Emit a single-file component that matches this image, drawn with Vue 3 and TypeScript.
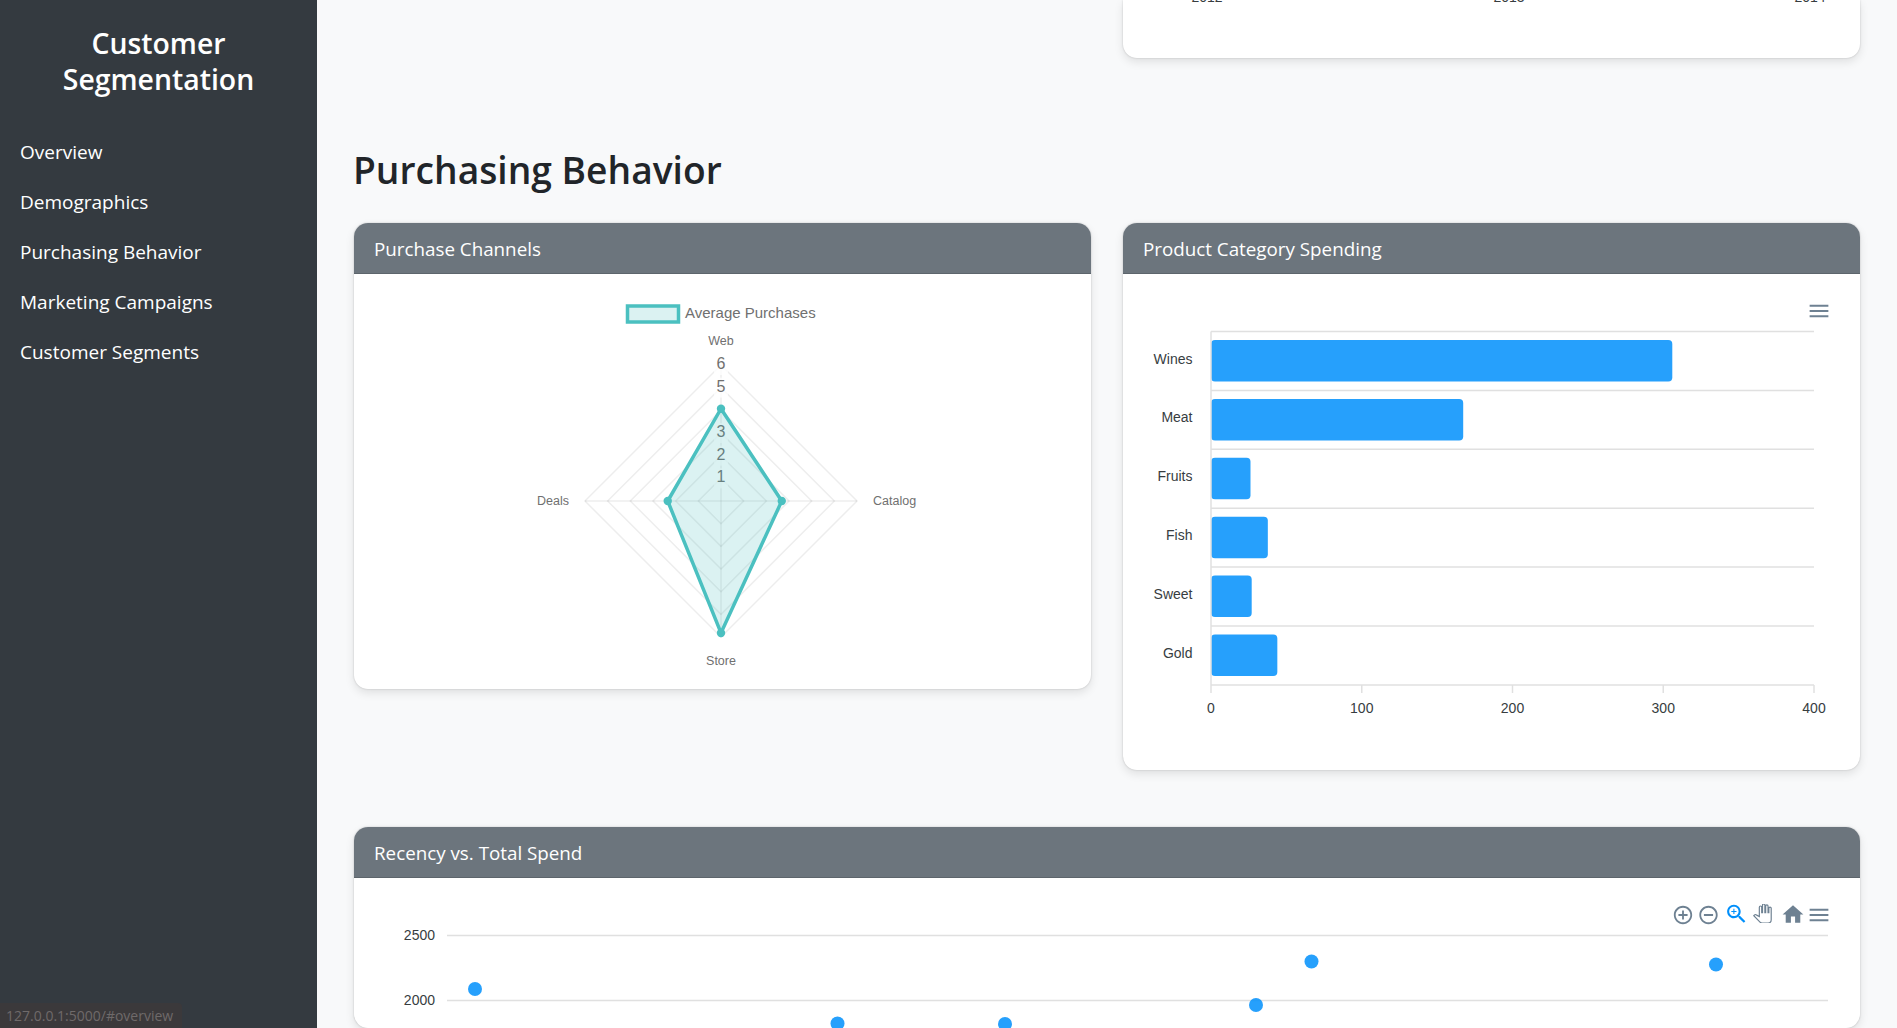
<script setup lang="ts">
const navItems = ["Overview", "Demographics", "Purchasing Behavior", "Marketing Campaigns", "Customer Segments"];

// radar: page coordinates, axis order web / catalog / store / deals
const cx = 721;
const cy = 501;
const step = 22.67;
const diamond = (r: number) =>
    `${cx},${cy - r} ${cx + r},${cy} ${cx},${cy + r} ${cx - r},${cy}`;
const levels = [1, 2, 3, 4, 5, 6].map((n) => diamond(n * step));
const ticks = [1, 2, 3, 5, 6];
const purchases = [4.07, 2.68, 5.82, 2.35];
const radarPoints = [
    { x: cx, y: cy - purchases[0] * step },
    { x: cx + purchases[1] * step, y: cy },
    { x: cx, y: cy + purchases[2] * step },
    { x: cx - purchases[3] * step, y: cy },
];
const radarPolygon = radarPoints.map((p) => `${p.x},${p.y}`).join(" ");

// bars
const barLeft = 1211;
const unit = 603 / 400;
const rowTop = 331.5;
const rowH = 58.9;
const categories = [
    { name: "Wines", value: 306 },
    { name: "Meat", value: 167.3 },
    { name: "Fruits", value: 26.2 },
    { name: "Fish", value: 37.7 },
    { name: "Sweet", value: 27 },
    { name: "Gold", value: 44 },
];
const xTicks = [0, 100, 200, 300, 400];

const scatter = [
    { x: 475, y: 989 },
    { x: 837.5, y: 1023.5 },
    { x: 1005, y: 1024 },
    { x: 1256, y: 1005 },
    { x: 1311.5, y: 961.5 },
    { x: 1716, y: 964.5 },
];
</script>

<template>
    <div class="app">
        <aside class="sidebar">
            <h2 class="brand">Customer Segmentation</h2>
            <nav class="nav">
                <a v-for="item in navItems" :key="item" class="nav-link" href="#">{{ item }}</a>
            </nav>
        </aside>

        <main class="content">
            <div class="row">
                <div></div>
                <div class="card tail">
                    <svg class="chart" viewBox="1123 0 737 58" width="737" height="58">
                        <text class="axis" x="1207" y="2" text-anchor="middle">2012</text>
                        <text class="axis" x="1509" y="2" text-anchor="middle">2013</text>
                        <text class="axis" x="1810" y="2" text-anchor="middle">2014</text>
                    </svg>
                </div>
            </div>

            <h1 class="section-title">Purchasing Behavior</h1>

            <div class="row">
                <section class="card">
                    <header class="card-header">Purchase Channels</header>
                    <svg class="chart" viewBox="354 274 737 415" width="737" height="415">
                        <rect x="627.5" y="306" width="51" height="16" fill="rgba(75,192,192,.2)" stroke="#4bc0c0" stroke-width="3.5" />
                        <text class="legend" x="685" y="318">Average Purchases</text>
                        <text class="point-label" :x="cx" y="344.5" text-anchor="middle">Web</text>
                        <text class="point-label" x="873" y="505" text-anchor="start">Catalog</text>
                        <text class="point-label" x="569" y="505" text-anchor="end">Deals</text>
                        <text class="point-label" :x="cx" y="665" text-anchor="middle">Store</text>

                        <polygon v-for="(pts, i) in levels" :key="i" :points="pts" fill="none" class="radar-grid" />
                        <line :x1="cx" :y1="cy - 136" :x2="cx" :y2="cy + 136" class="radar-grid" />
                        <line :x1="cx - 136" :y1="cy" :x2="cx + 136" :y2="cy" class="radar-grid" />
                        <g v-for="t in ticks" :key="t">
                            <rect :x="cx - 7" :y="cy - t * step - 10" width="14" height="20" fill="rgba(255,255,255,.75)" />
                            <text class="tick" :x="cx" :y="cy - t * step + 4" text-anchor="middle">{{ t }}</text>
                        </g>

                        <polygon :points="radarPolygon" fill="rgba(75,192,192,.2)" stroke="#4bc0c0" stroke-width="3.5" />
                        <circle v-for="(p, i) in radarPoints" :key="i" :cx="p.x" :cy="p.y" r="4.2" fill="#4bc0c0" />
                    </svg>
                </section>

                <section class="card">
                    <header class="card-header">Product Category Spending</header>
                    <svg class="chart" viewBox="1123 274 737 496" width="737" height="496">
                        <svg x="1806.5" y="298.5" width="25" height="25" viewBox="0 0 24 24" fill="#6e8192">
                            <path d="M3 18h18v-2H3v2zm0-5h18v-2H3v2zm0-7v2h18V6H3z" />
                        </svg>

                        <g v-for="(c, i) in categories" :key="c.name">
                            <line :x1="barLeft" :y1="rowTop + i * rowH" x2="1814" :y2="rowTop + i * rowH" class="grid" />
                            <rect :x="barLeft" :y="rowTop + i * rowH + 8.5" :width="c.value * unit" height="41.5" rx="4" class="bar" />
                            <text class="axis" x="1192.5" :y="rowTop + i * rowH + 32" text-anchor="end">{{ c.name }}</text>
                        </g>
                        <line :x1="barLeft" :y1="rowTop" :x2="barLeft" y2="685" class="grid" />
                        <line :x1="barLeft" y1="685" x2="1814" y2="685" class="grid" />
                        <g v-for="t in xTicks" :key="t">
                            <line :x1="barLeft + t * unit" y1="685" :x2="barLeft + t * unit" y2="693" class="grid" />
                            <text class="axis" :x="barLeft + t * unit" y="713" text-anchor="middle">{{ t }}</text>
                        </g>
                    </svg>
                </section>
            </div>

            <section class="card wide">
                <header class="card-header">Recency vs. Total Spend</header>
                <svg class="chart" viewBox="354 878 1506 150" width="1506" height="150">
                    <svg x="1672" y="904" width="22" height="22" viewBox="0 0 24 24" fill="#6e8192">
                        <path d="M13 7h-2v4H7v2h4v4h2v-4h4v-2h-4V7zm-1-5C6.48 2 2 6.48 2 12s4.48 10 10 10 10-4.48 10-10S17.52 2 12 2zm0 18c-4.41 0-8-3.59-8-8s3.59-8 8-8 8 3.59 8 8-3.59 8-8 8z" />
                    </svg>
                    <svg x="1697.5" y="904" width="22" height="22" viewBox="0 0 24 24" fill="#6e8192">
                        <path d="M7 11v2h10v-2H7zm5-9C6.48 2 2 6.48 2 12s4.48 10 10 10 10-4.48 10-10S17.52 2 12 2zm0 18c-4.41 0-8-3.59-8-8s3.59-8 8-8 8 3.59 8 8-3.59 8-8 8z" />
                    </svg>
                    <svg x="1724" y="901.5" width="25" height="25" viewBox="0 0 24 24" fill="#008ffb">
                        <path d="M15.5 14h-.79l-.28-.27C15.41 12.59 16 11.11 16 9.5 16 5.91 13.09 3 9.5 3S3 5.91 3 9.5 5.91 16 9.5 16c1.61 0 3.09-.59 4.23-1.57l.27.28v.79l5 4.99L20.49 19l-4.99-5zm-6 0C7.01 14 5 11.99 5 9.5S7.01 5 9.5 5 14 7.01 14 9.5 11.99 14 9.5 14z" />
                        <path d="M12 10h-2v2H9v-2H7V9h2V7h1v2h2v1z" />
                    </svg>
                    <svg x="1753" y="904" width="19" height="19" viewBox="0 0 24 24" fill="#fff" stroke="#6e8192" stroke-width="1.5">
                        <path d="M23 5.5V20c0 2.2-1.8 4-4 4h-7.3c-1.08 0-2.1-.43-2.85-1.19L1 14.83s1.26-1.23 1.3-1.25c.22-.19.49-.29.79-.29.22 0 .42.06.6.16.04.01 4.31 2.46 4.31 2.46V4c0-.83.67-1.5 1.5-1.5S11 3.17 11 4v7h1V1.5c0-.83.67-1.5 1.5-1.5S15 .67 15 1.5V11h1V2.5c0-.83.67-1.5 1.5-1.5s1.5.67 1.5 1.5V11h1V5.5c0-.83.67-1.5 1.5-1.5s1.5.67 1.5 1.5z" />
                    </svg>
                    <svg x="1780.5" y="902" width="25" height="25" viewBox="0 0 24 24" fill="#6e8192">
                        <path d="M10 20v-6h4v6h5v-8h3L12 3 2 12h3v8z" />
                    </svg>
                    <svg x="1806.5" y="902.5" width="25" height="25" viewBox="0 0 24 24" fill="#6e8192">
                        <path d="M3 18h18v-2H3v2zm0-5h18v-2H3v2zm0-7v2h18V6H3z" />
                    </svg>

                    <line x1="447" y1="935.5" x2="1828" y2="935.5" class="grid" />
                    <line x1="447" y1="1000.5" x2="1828" y2="1000.5" class="grid" />
                    <text class="axis" x="435" y="940" text-anchor="end">2500</text>
                    <text class="axis" x="435" y="1005" text-anchor="end">2000</text>
                    <circle v-for="(p, i) in scatter" :key="i" :cx="p.x" :cy="p.y" r="7" class="bar" />
                </svg>
            </section>
        </main>

        <div class="status-bubble">127.0.0.1:5000/#overview</div>
    </div>
</template>

<style>
html,
body {
    margin: 0;
    background: #f8f9fa;
}
</style>

<style scoped>
.app {
    display: flex;
    height: 100vh;
    overflow: hidden;
    font-family: "Open Sans", "Noto Sans", sans-serif;
    color: #212529;
}

.sidebar {
    flex: 0 0 317px;
    background: #343a40;
    color: #fff;
    box-sizing: border-box;
    padding: 25px 20px 0;
}

.brand {
    margin: 0 0 30px;
    font-size: 28.4px;
    font-weight: 600;
    line-height: 36px;
    text-align: center;
}

.nav {
    display: flex;
    flex-direction: column;
}

.nav-link {
    height: 50px;
    line-height: 50px;
    font-size: 19px;
    color: #fff;
    text-decoration: none;
}

.content {
    flex: 1;
    min-width: 0;
    padding: 0 37px;
    background: #f8f9fa;
}

.row {
    display: grid;
    grid-template-columns: 737px 737px;
    gap: 32px;
    align-items: start;
}

.section-title {
    margin: 0 0 0 -1px;
    padding: 85px 0 27px;
    font-size: 37.2px;
    font-weight: 600;
    line-height: 53px;
}

.card {
    background: #fff;
    border-radius: 14px;
    box-shadow: 0 4px 10px rgba(0, 0, 0, 0.1), 0 0 2px rgba(0, 0, 0, 0.2);
    overflow: hidden;
}

.tail {
    height: 58px;
    border-radius: 0 0 14px 14px;
}

.wide {
    margin-top: 57px;
}

.card-header {
    height: 50px;
    line-height: 52px;
    padding: 0 20px;
    font-size: 18.8px;
    color: #fff;
    background: #6c757d;
    border-bottom: 1px solid #5d656c;
}

.chart {
    display: block;
}

.legend {
    font: 15px "Liberation Sans", Arial, sans-serif;
    fill: #707070;
}

.point-label {
    font: 12.5px "Liberation Sans", Arial, sans-serif;
    fill: #707070;
}

.tick {
    font: 16px "Liberation Sans", Arial, sans-serif;
    fill: #707070;
}

.axis {
    font: 14px "Liberation Sans", Arial, sans-serif;
    fill: #373d3f;
}

.grid {
    stroke: #e0e0e0;
    stroke-width: 1.5;
}

.radar-grid {
    stroke: rgba(0, 0, 0, 0.07);
    stroke-width: 1.5;
}

.bar {
    fill: #008ffb;
    fill-opacity: 0.85;
}

.status-bubble {
    position: fixed;
    left: 0;
    bottom: 0;
    height: 25px;
    width: 182px;
    box-sizing: border-box;
    padding-left: 6px;
    line-height: 26px;
    font-size: 14px;
    color: #6f6a6a;
    background: #3b393b;
    border-top-right-radius: 4px;
    white-space: nowrap;
}
</style>
